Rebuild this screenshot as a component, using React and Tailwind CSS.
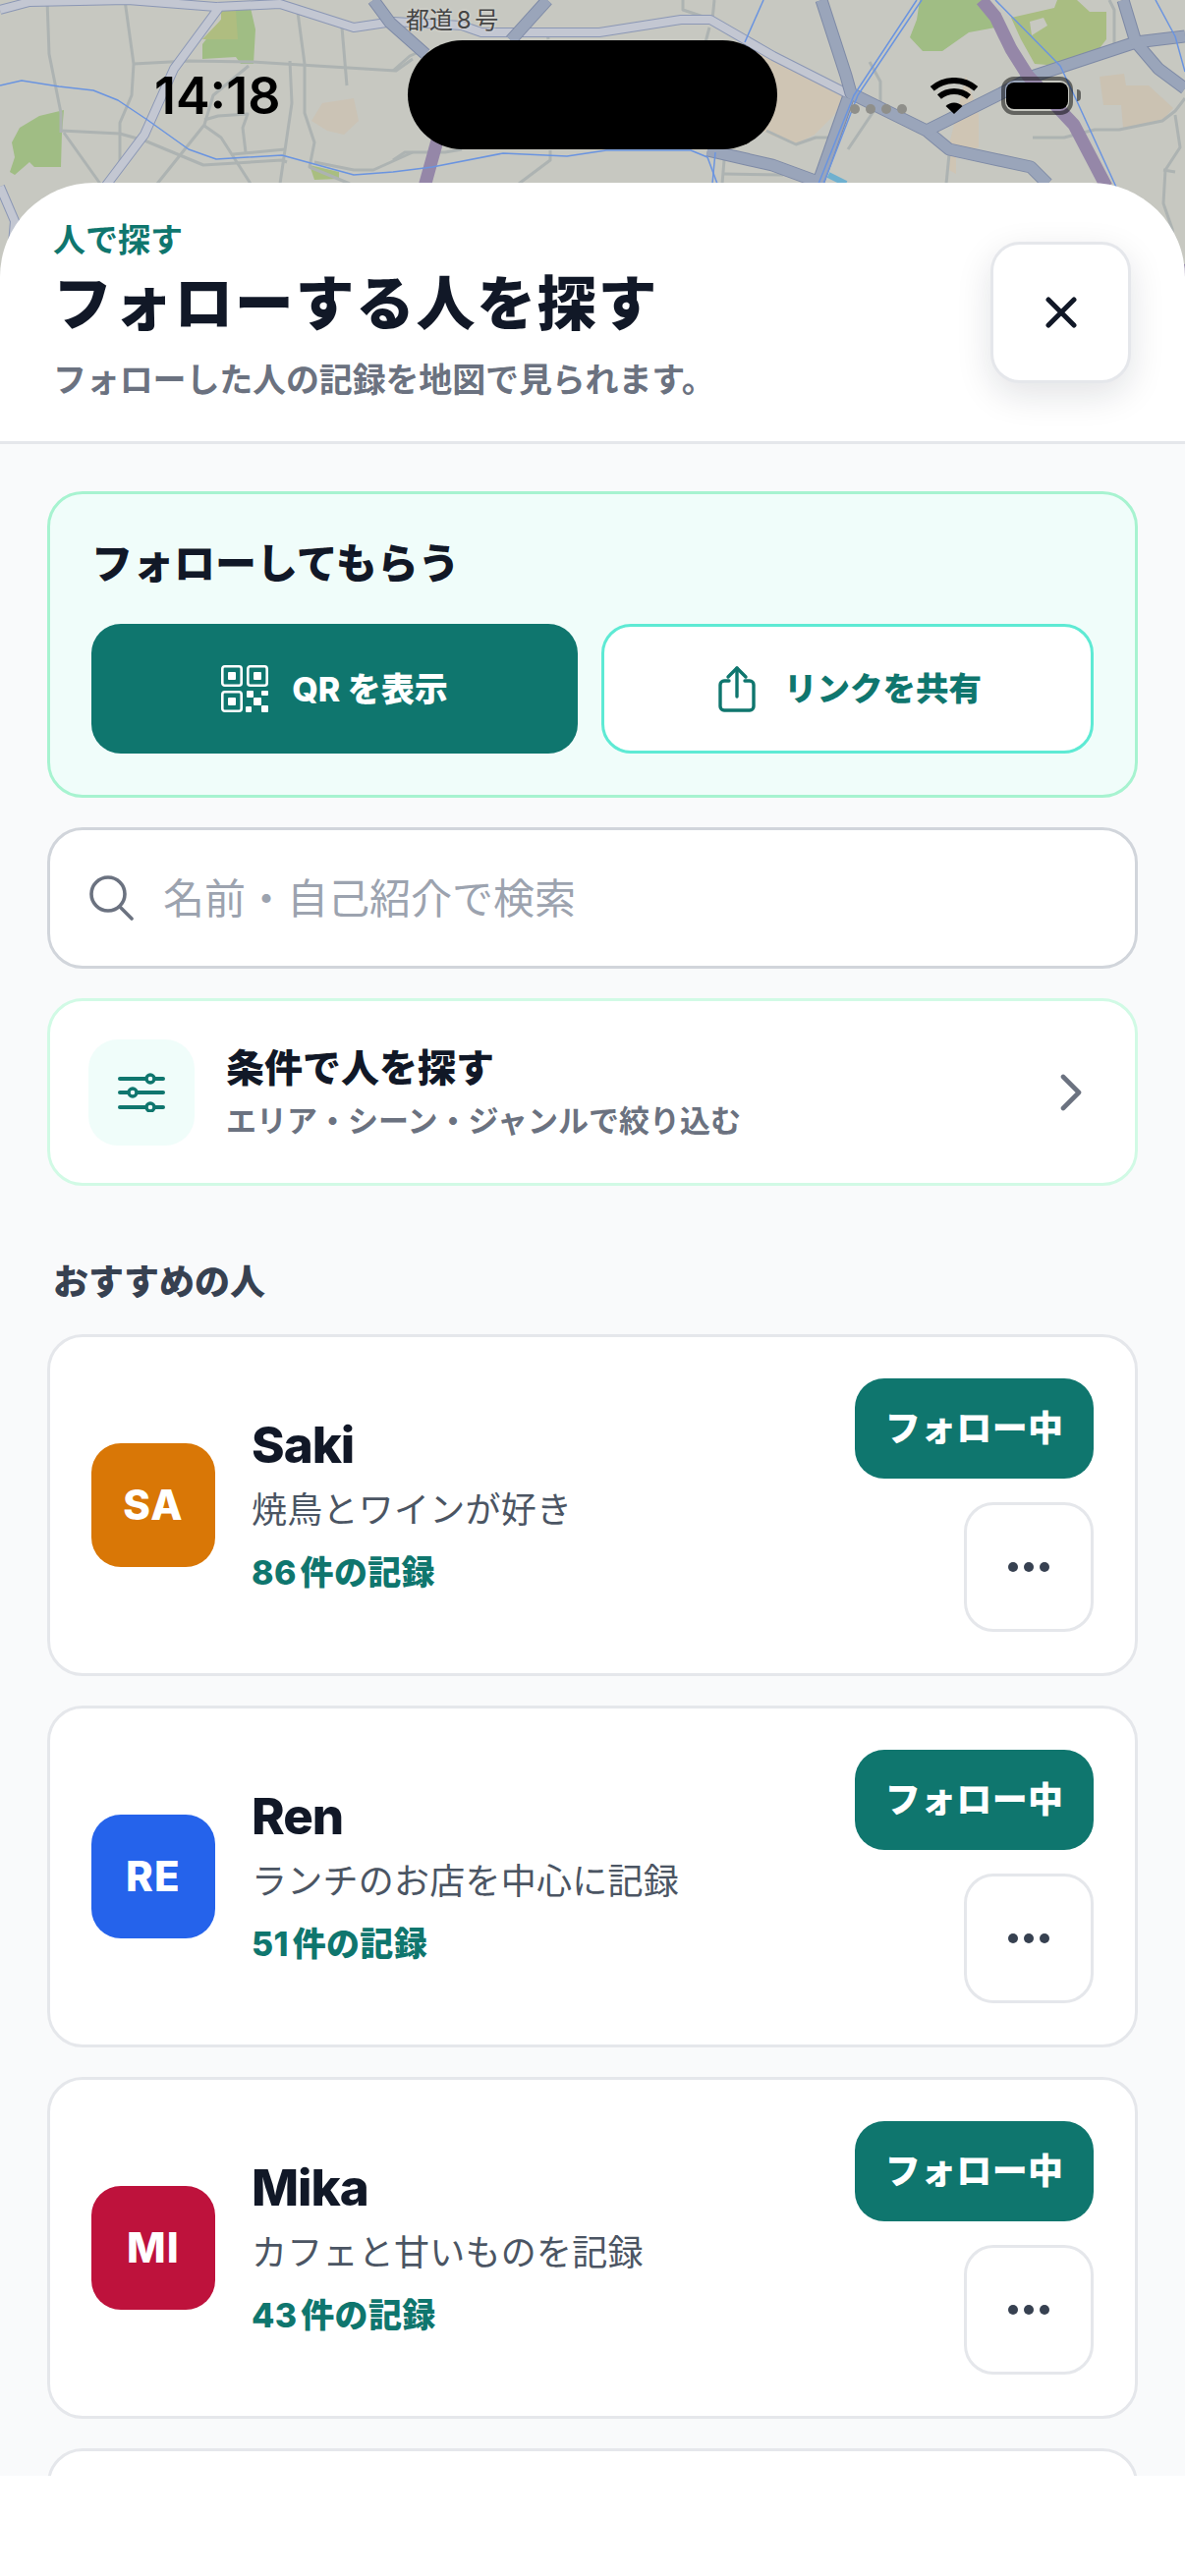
import React from 'react';

const people = [
    { id: 'saki', initials: 'SA', name: 'Saki', bio: '焼鳥とワインが好き', count: '86', color: 'bg-[#d97706]' },
    { id: 'ren', initials: 'RE', name: 'Ren', bio: 'ランチのお店を中心に記録', count: '51', color: 'bg-[#2563eb]' },
    { id: 'mika', initials: 'MI', name: 'Mika', bio: 'カフェと甘いものを記録', count: '43', color: 'bg-[#be123c]' },
];

const thinRoads = [
    'M48 0L50 55L62 115L62 135', 'M127 0L136 65L134 97L122 125L122 165', 'M136 65L192 62L257 63L403 72L420 60',
    'M62 133L122 136L147 143L207 168L287 163L292 165', 'M65 135L102 187', 'M253 67L217 97L208 127L160 187',
    'M208 122L222 118L252 116L247 130L250 155', 'M208 128L225 140L255 187', 'M237 157L290 152', 'M295 62L297 105L285 187',
    'M302 5L310 65L310 115L320 145L315 170L356 187', 'M348 28L353 87', 'M320 165L360 173L380 173L420 155',
    'M400 72L417 57L433 50', 'M400 163L412 155L453 155L470 152', 'M560 153L560 163L528 187', 'M737 163L735 187', 'M737 177L797 178',
    'M780 133L810 147L830 140L845 140', 'M885 63L896 83L896 103L863 152', 'M1051 140L1083 140L1114 132L1139 132L1183 123L1196 113L1206 100',
    'M1196 117L1201 150L1186 173L1184 207L1193 233L1195 255', 'M1184 173L1196 175', 'M1129 0L1134 10L1134 47', 'M966 157L963 187',
    'M695 0L695 10L725 20L727 0', 'M722 28L718 43', 'M557 33L558 40',
];

const blueRoads = [
    'M380 0L397 23L433 55', 'M557 0L520 41', 'M720 153L786 168L835 186', 'M836 0L861 77L866 95L943 133L966 152L1049 170L1066 187',
    'M863 100L833 185', 'M943 133L1019 95L1053 77L1156 43L1206 37', 'M1143 0L1156 43L1179 70L1206 90',
];

const rails = [
    'M0 87L22 82L60 88L95 92L120 102L150 122L192 152L220 162L287 158L360 178L400 175L440 170L512 156L577 159L617 153L703 153L720 160L730 187',
    'M728 155L725 187', 'M777 0L758 43', 'M933 0L869 97L833 187', 'M938 0L873 97L838 187', 'M1013 0L1079 67L1096 103L1139 197', 'M1176 0L1196 37L1206 73',
];

// 地図はスクリーンショットの道路をなぞっただけ
const MapBackdrop = () => (
    <svg className="absolute left-0 top-0" width="1206" height="300" viewBox="0 0 1206 300">
        <rect width="1206" height="300" fill="#c7c8c1" />
        <path d="M225 10L255 8L260 30L258 65L245 65L240 58L206 60L206 45L225 20Z" fill="#a0bd84" />
        <path d="M225 10L240 10L242 40L206 40L225 20Z" fill="#afbd80" />
        <path d="M65 112L63 135L62 170L35 170L30 165L15 178L10 175L15 160L12 145L20 130L40 118Z" fill="#a0bd84" />
        <path d="M315 168L345 175L345 182L320 183Z" fill="#a9be80" />
        <path d="M936 0L1005 0L1013 28L986 33L959 52L939 52L926 38L933 20Z" fill="#a0bd84" />
        <path d="M1029 18L1073 8L1076 0L1096 0L1109 12L1126 12L1126 40L1116 53L1079 67L1053 65L1039 40Z" fill="#a9bd82" />
        <path d="M1048 22L1062 18L1066 26L1050 36Z" fill="#c7c8c1" />
        <path d="M317 123L328 105L360 100L365 123L350 137L333 133Z" fill="#cbc3b5" />
        <path d="M770 50L860 95L849 117L829 137L809 147L786 138L770 130Z" fill="#cfc5b4" />
        <path d="M983 77L996 117L996 150L973 157L973 177L966 173L966 147Z" fill="#cfc5b4" />
        <path d="M1119 78L1144 75L1146 87L1169 87L1194 110L1183 123L1143 130L1141 107L1123 107Z" fill="#cbc2b2" />
        <g fill="none" stroke="#adb3b2" strokeWidth="3" strokeLinejoin="round">
            {thinRoads.map((d) => (
                <path key={d} d={d} />
            ))}
        </g>
        <g fill="none" strokeLinejoin="round">
            <path d="M0 10L30 2L130 0L220 7L285 4L360 28L400 22L470 26L490 33L610 33L693 20L723 20L787 57L862 95M225 5L177 70L147 137L107 190M0 190L15 225L10 285" stroke="#8b97b5" strokeWidth="10" />
            <path d="M0 10L30 2L130 0L220 7L285 4L360 28L400 22L470 26L490 33L610 33L693 20L723 20L787 57L862 95M225 5L177 70L147 137L107 190M0 190L15 225L10 285" stroke="#c3c7d2" strokeWidth="8" />
            {blueRoads.map((d) => (
                <path key={d} d={d} stroke="#7e8aa6" strokeWidth="13" />
            ))}
            {blueRoads.map((d) => (
                <path key={`f-${d}`} d={d} stroke="#9aa5ba" strokeWidth="11" />
            ))}
            <path d="M450 125L432 190M999 0L1013 17L1029 50L1046 77L1093 127L1126 190M1200 270L1206 300" stroke="#9587a8" strokeWidth="13" />
            <path d="M843 178L861 187" stroke="#6fb0cf" strokeWidth="6" />
            {rails.map((d) => (
                <path key={d} d={d} stroke="#6a94e0" strokeWidth="1.5" />
            ))}
        </g>
    </svg>
);

const StatusBar = () => (
    <>
        <div className="absolute left-[413px] top-[6px] text-[24px] leading-[30px] text-[#454545] [word-spacing:-3px] [text-shadow:0_0_3px_#e5e5e0]">都道 8 号</div>
        <div className="absolute left-[157px] top-[68px] text-[52px] leading-[60px] font-semibold text-black [font-family:Inter,sans-serif]">14:18</div>
        <div className="absolute left-[415px] top-[41px] h-[111px] w-[376px] rounded-full bg-black" />
        <div className="absolute left-[865px] top-[106px] flex gap-[6px]">
            <span className="h-[10px] w-[10px] rounded-full bg-[#8f8f8a]" />
            <span className="h-[10px] w-[10px] rounded-full bg-[#8f8f8a]" />
            <span className="h-[10px] w-[10px] rounded-full bg-[#8f8f8a]" />
            <span className="h-[10px] w-[10px] rounded-full bg-[#8f8f8a]" />
        </div>
        <svg className="absolute left-[946px] top-[79px]" width="50" height="38" viewBox="0 0 50 38" fill="none">
            <path d="M2.7 11.3A34 34 0 0 1 47.3 11.3" stroke="#000" strokeWidth="6" />
            <path d="M9.9 19.6A23 23 0 0 1 40.1 19.6" stroke="#000" strokeWidth="6" />
            <path d="M25 37L16.5 29A12 12 0 0 1 33.5 29Z" fill="#000" />
        </svg>
        <div className="absolute left-[1019px] top-[78px] flex h-[39px] w-[73px] items-center justify-center rounded-[13px] border-[4px] border-black/50">
            <div className="h-[27px] w-[63px] rounded-[8px] bg-black" />
        </div>
        <div className="absolute left-[1096px] top-[91px] h-[12px] w-[4px] rounded-r-full bg-black/50" />
    </>
);

const QrIcon = () => (
    <svg width="48" height="48" viewBox="0 0 48 48" fill="none" className="shrink-0">
        <g stroke="#fff" strokeWidth="2.6">
            <rect x="1.3" y="1.3" width="19.4" height="19.4" rx="2.5" />
            <rect x="27.3" y="1.3" width="19.4" height="19.4" rx="2.5" />
            <rect x="1.3" y="27.3" width="19.4" height="19.4" rx="2.5" />
        </g>
        <g fill="#fff">
            <rect x="7" y="7" width="8" height="8" rx="1" />
            <rect x="33" y="7" width="8" height="8" rx="1" />
            <rect x="7" y="33" width="8" height="8" rx="1" />
            <rect x="26" y="26" width="7" height="7" rx="1" />
            <rect x="41" y="26" width="7" height="5" rx="1" />
            <rect x="33" y="33" width="8" height="8" rx="1" />
            <rect x="25" y="42" width="6" height="6" rx="1" />
            <rect x="41" y="41" width="7" height="7" rx="1" />
        </g>
    </svg>
);

const ShareIcon = () => (
    <svg width="48" height="48" viewBox="0 0 48 48" fill="none" stroke="#0f766e" strokeWidth="3.4" strokeLinecap="round" strokeLinejoin="round" className="shrink-0">
        <path d="M16 16H11a4 4 0 0 0-4 4v22a4 4 0 0 0 4 4h26a4 4 0 0 0 4-4V20a4 4 0 0 0-4-4h-5" />
        <path d="M24 3v29" />
        <path d="M15 12l9-9 9 9" />
    </svg>
);

const SlidersIcon = () => (
    <svg width="48" height="40" viewBox="0 0 48 40" fill="none" stroke="#0f766e">
        <g strokeWidth="4" strokeLinecap="round">
            <path d="M2 6h44" />
            <path d="M2 20h44" />
            <path d="M2 35h44" />
        </g>
        <g fill="#f0fdfa" strokeWidth="3.4">
            <circle cx="33" cy="6" r="4" />
            <circle cx="15" cy="20" r="4" />
            <circle cx="33" cy="35" r="4" />
        </g>
    </svg>
);

const PersonCard = ({ person }) => (
    <div className="flex h-[348px] shrink-0 items-center justify-between rounded-[36px] border-[3px] border-[#e5e7eb] bg-white px-[42px]">
        <div className="flex items-center gap-[37px]">
            <div className={`flex h-[126px] w-[126px] items-center justify-center rounded-[30px] pb-[2px] text-[42px] font-extrabold tracking-[0.03em] text-white ${person.color}`}>
                {person.initials}
            </div>
            <div className="flex flex-col pt-[2px]">
                <div className="text-[51px] leading-[64px] font-extrabold tracking-[-0.02em] text-[#111827]">{person.name}</div>
                <div className="mt-[7px] text-[36px] leading-[54px] tracking-[0.25px] text-[#4b5563]">{person.bio}</div>
                <div className="mt-[10px] text-[34px] leading-[54px] font-extrabold tracking-[0.01em] text-[#0f766e] [word-spacing:-4px]">{person.count} 件の記録</div>
            </div>
        </div>
        <div className="flex flex-col items-end gap-[24px]">
            <button className="h-[102px] w-[243px] rounded-[30px] bg-[#0f766e] text-[36px] font-extrabold tracking-[0.3px] text-white">フォロー中</button>
            <button className="flex h-[132px] w-[132px] items-center justify-center gap-[6px] rounded-[30px] border-[3px] border-[#e5e7eb] bg-white">
                <span className="h-[10px] w-[10px] rounded-full bg-[#374151]" />
                <span className="h-[10px] w-[10px] rounded-full bg-[#374151]" />
                <span className="h-[10px] w-[10px] rounded-full bg-[#374151]" />
            </button>
        </div>
    </div>
);

const App = () => {
    return (
        <div className="relative h-[2622px] w-[1206px] overflow-hidden bg-white [font-family:Inter,'Noto_Sans_CJK_JP',sans-serif]">
            <MapBackdrop />
            <StatusBar />

            <div className="relative mt-[186px] h-[2436px] overflow-hidden rounded-t-[96px] bg-white">
                <div className="flex h-[266px] items-center justify-between border-b-[3px] border-[#e5e7eb] pl-[54px] pr-[55px]">
                    <div className="flex flex-col">
                        <div className="-mt-[2px] text-[33px] leading-[44px] font-bold text-[#0f766e]">人で探す</div>
                        <div className="mt-[4px] text-[60px] leading-[78px] font-extrabold tracking-[1.6px] text-[#111827]">フォローする人を探す</div>
                        <div className="mt-[15px] text-[34px] leading-[48px] font-semibold tracking-[-0.15px] text-[#6b7280]">フォローした人の記録を地図で見られます。</div>
                    </div>
                    <button className="flex h-[144px] w-[143px] items-center justify-center rounded-[30px] border-[3px] border-[#e5e7eb] bg-white shadow-[0_12px_36px_rgba(17,24,39,0.12)]">
                        <svg width="32" height="32" viewBox="0 0 32 32" fill="none" stroke="#111827" strokeWidth="5" strokeLinecap="round">
                            <path d="M3 3l26 26M29 3L3 29" />
                        </svg>
                    </button>
                </div>

                <div className="flex h-[2068px] flex-col overflow-hidden bg-[#f9fafb] px-[48px] pt-[48px]">
                    <div className="shrink-0 rounded-[36px] border-[3px] border-[#a7f3d0] bg-[#f0fdfa] p-[42px]">
                        <div className="text-[42px] leading-[58px] font-extrabold text-[#111827]">フォローしてもらう</div>
                        <div className="mt-[32px] flex gap-[24px]">
                            <button className="flex h-[132px] w-[495px] items-center justify-center gap-[24px] rounded-[30px] bg-[#0f766e] text-[34px] font-extrabold text-white">
                                <QrIcon />
                                QR を表示
                            </button>
                            <button className="flex h-[132px] flex-1 items-center justify-center gap-[24px] rounded-[30px] border-[3px] border-[#5eead4] bg-white text-[33.5px] font-extrabold text-[#0f766e]">
                                <ShareIcon />
                                リンクを共有
                            </button>
                        </div>
                    </div>

                    <div className="mt-[30px] flex h-[144px] shrink-0 items-center gap-[30px] rounded-[36px] border-[3px] border-[#d1d5db] bg-white pl-[39px]">
                        <svg width="46" height="46" viewBox="0 0 46 46" fill="none" stroke="#6b7280" strokeWidth="3.6" strokeLinecap="round" className="shrink-0">
                            <circle cx="20" cy="19" r="17" />
                            <path d="M32 32l12 12" />
                        </svg>
                        <span className="text-[42px] text-[#9ca3af]">名前・自己紹介で検索</span>
                    </div>

                    <div className="mt-[30px] flex h-[191px] shrink-0 items-center justify-between rounded-[36px] border-[3px] border-[#d1fae5] bg-white pl-[39px] pr-[53px]">
                        <div className="flex items-center gap-[32px]">
                            <div className="flex h-[108px] w-[108px] items-center justify-center rounded-[30px] bg-[#f0fdfa]">
                                <SlidersIcon />
                            </div>
                            <div className="flex flex-col">
                                <div className="text-[39px] leading-[54px] font-extrabold text-[#111827]">条件で人を探す</div>
                                <div className="mt-[5px] text-[31px] leading-[44px] font-semibold text-[#6b7280]">エリア・シーン・ジャンルで絞り込む</div>
                            </div>
                        </div>
                        <svg width="24" height="38" viewBox="0 0 24 38" fill="none" stroke="#6b7280" strokeWidth="4.6" strokeLinecap="round" strokeLinejoin="round">
                            <path d="M4 3l16 16L4 35" />
                        </svg>
                    </div>

                    <div className="ml-[6px] mt-[71px] shrink-0 text-[36px] leading-[54px] font-extrabold text-[#374151]">おすすめの人</div>

                    <div className="mt-[26px] flex flex-col gap-[30px]">
                        {people.map((person) => (
                            <PersonCard key={person.id} person={person} />
                        ))}
                        <div className="h-[348px] shrink-0 rounded-[36px] border-[3px] border-[#e5e7eb] bg-white" />
                    </div>
                </div>
            </div>
        </div>
    );
};

export default App;
